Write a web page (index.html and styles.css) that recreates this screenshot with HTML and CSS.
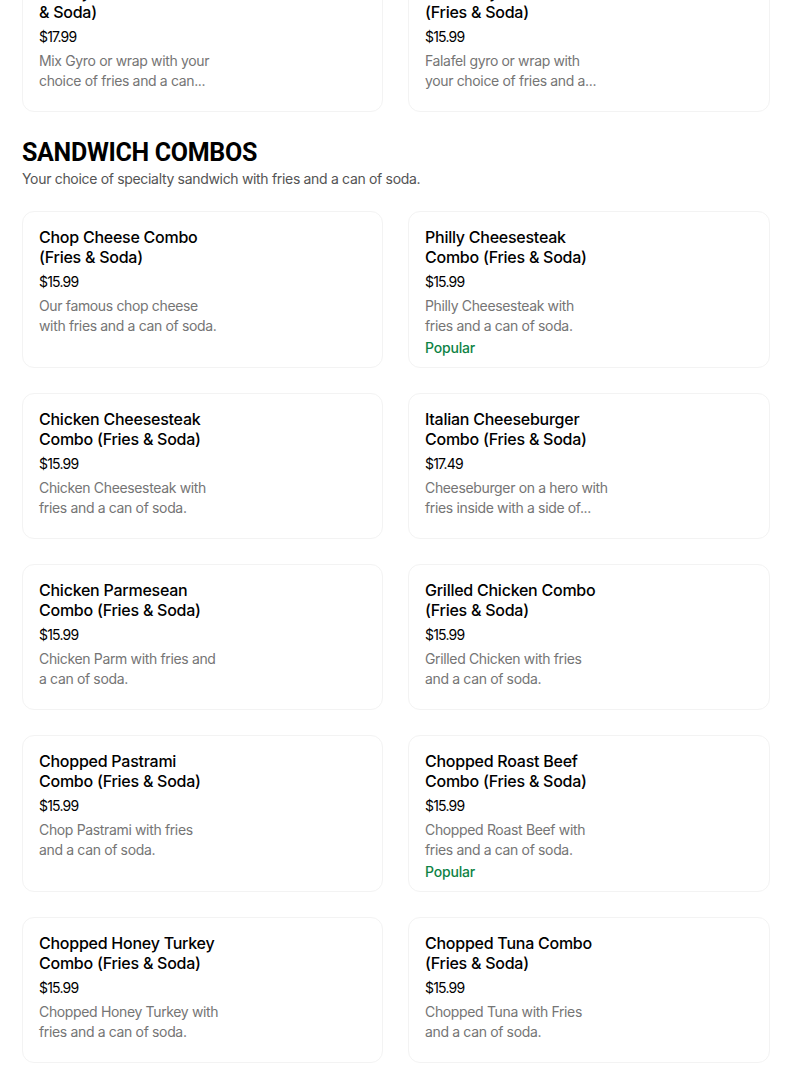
FILE: index.html
```html
<!DOCTYPE html>
<html>
<head>
<meta charset="utf-8">
<link rel="stylesheet" href="styles.css">
</head>
<body>
<main class="menu">
  <section class="section section--cut">
    <div class="grid">
      <div class="card">
        <div class="card-body">
          <div class="title">Mix Gyro Combo (Fries<br>&amp; Soda)</div>
          <div class="price">$17.99</div>
          <div class="desc">Mix Gyro or wrap with your<br>choice of fries and a can...</div>
        </div>
      </div>
      <div class="card">
        <div class="card-body">
          <div class="title">Falafel Gyro Combo<br>(Fries &amp; Soda)</div>
          <div class="price">$15.99</div>
          <div class="desc">Falafel gyro or wrap with<br>your choice of fries and a...</div>
        </div>
      </div>
    </div>
  </section>

  <section class="section">
    <h2 class="section-title">SANDWICH COMBOS</h2>
    <p class="section-sub">Your choice of specialty sandwich with fries and a can of soda.</p>
    <div class="grid">
      <div class="card">
        <div class="card-body">
          <div class="title">Chop Cheese Combo<br>(Fries &amp; Soda)</div>
          <div class="price">$15.99</div>
          <div class="desc">Our famous chop cheese<br>with fries and a can of soda.</div>
        </div>
      </div>
      <div class="card">
        <div class="card-body">
          <div class="title">Philly Cheesesteak<br>Combo (Fries &amp; Soda)</div>
          <div class="price">$15.99</div>
          <div class="desc">Philly Cheesesteak with<br>fries and a can of soda.</div>
          <div class="badge">Popular</div>
        </div>
      </div>
      <div class="card">
        <div class="card-body">
          <div class="title">Chicken Cheesesteak<br>Combo (Fries &amp; Soda)</div>
          <div class="price">$15.99</div>
          <div class="desc">Chicken Cheesesteak with<br>fries and a can of soda.</div>
        </div>
      </div>
      <div class="card">
        <div class="card-body">
          <div class="title">Italian Cheeseburger<br>Combo (Fries &amp; Soda)</div>
          <div class="price">$17.49</div>
          <div class="desc">Cheeseburger on a hero with<br>fries inside with a side of...</div>
        </div>
      </div>
      <div class="card">
        <div class="card-body">
          <div class="title">Chicken Parmesean<br>Combo (Fries &amp; Soda)</div>
          <div class="price">$15.99</div>
          <div class="desc">Chicken Parm with fries and<br>a can of soda.</div>
        </div>
      </div>
      <div class="card">
        <div class="card-body">
          <div class="title">Grilled Chicken Combo<br>(Fries &amp; Soda)</div>
          <div class="price">$15.99</div>
          <div class="desc">Grilled Chicken with fries<br>and a can of soda.</div>
        </div>
      </div>
      <div class="card">
        <div class="card-body">
          <div class="title">Chopped Pastrami<br>Combo (Fries &amp; Soda)</div>
          <div class="price">$15.99</div>
          <div class="desc">Chop Pastrami with fries<br>and a can of soda.</div>
        </div>
      </div>
      <div class="card">
        <div class="card-body">
          <div class="title">Chopped Roast Beef<br>Combo (Fries &amp; Soda)</div>
          <div class="price">$15.99</div>
          <div class="desc">Chopped Roast Beef with<br>fries and a can of soda.</div>
          <div class="badge">Popular</div>
        </div>
      </div>
      <div class="card">
        <div class="card-body">
          <div class="title">Chopped Honey Turkey<br>Combo (Fries &amp; Soda)</div>
          <div class="price">$15.99</div>
          <div class="desc">Chopped Honey Turkey with<br>fries and a can of soda.</div>
        </div>
      </div>
      <div class="card">
        <div class="card-body">
          <div class="title">Chopped Tuna Combo<br>(Fries &amp; Soda)</div>
          <div class="price">$15.99</div>
          <div class="desc">Chopped Tuna with Fries<br>and a can of soda.</div>
        </div>
      </div>
    </div>
  </section>
</main>
</body>
</html>
```

FILE: styles.css
```css
* { box-sizing: border-box; }

html, body {
  margin: 0;
  padding: 0;
  background: #ffffff;
}

body {
  font-family: Inter, "Liberation Sans", Arial, sans-serif;
  color: #000000;
  overflow: hidden;
}

.menu {
  width: 748px;
  margin-left: 22px;
}

.section--cut {
  margin-top: -34px;
}

.section-title {
  margin: 25px 0 0 0;
  font-family: Roboto, Inter, "Liberation Sans", Arial, sans-serif;
  font-size: 25px;
  line-height: 32px;
  font-weight: 700;
  letter-spacing: -0.3px;
  color: #000000;
}

.section-sub {
  margin: 0 0 22px 0;
  font-size: 14px;
  line-height: 20px;
  letter-spacing: -0.32px;
  color: #545454;
}

.grid {
  display: grid;
  grid-template-columns: 361px 362px;
  column-gap: 25px;
  row-gap: 25px;
}

.card {
  border: 1px solid #f3f3f3;
  border-radius: 12px;
  padding: 15px 16px 9px 16px;
  background: #ffffff;
}

.card-body {
  min-height: 120px;
  display: flex;
  flex-direction: column;
}

.title {
  font-size: 16px;
  line-height: 20px;
  font-weight: 500;
  letter-spacing: -0.25px;
  color: #000000;
}

.price {
  margin-top: 5px;
  font-size: 14px;
  line-height: 20px;
  color: #000000;
  letter-spacing: -0.8px;
}

.desc {
  margin-top: 4px;
  font-size: 14px;
  line-height: 20px;
  letter-spacing: -0.35px;
  color: #757575;
}

.badge {
  margin-top: 2px;
  font-size: 14px;
  line-height: 20px;
  font-weight: 500;
  letter-spacing: -0.2px;
  color: #0e8345;
}
```
